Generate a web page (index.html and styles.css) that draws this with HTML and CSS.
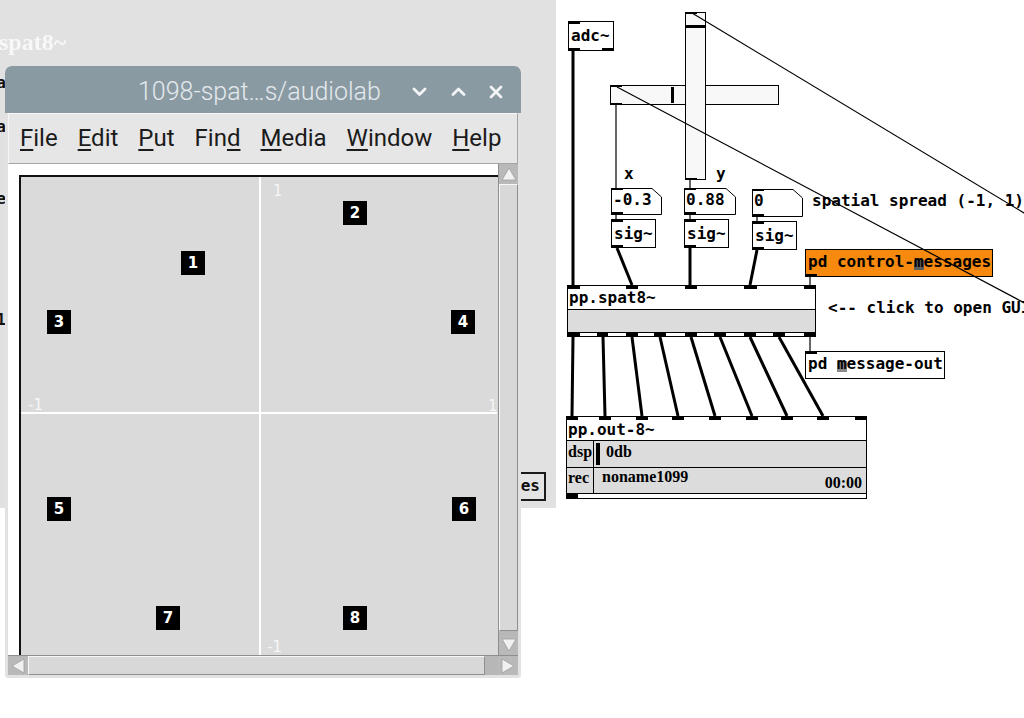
FILE: index.html
```html
<!DOCTYPE html>
<html lang="en">
<head>
<meta charset="utf-8">
<title>pp.spat8~</title>
<link rel="stylesheet" href="styles.css">
</head>
<body>
<div class="bgwin">
  <div class="bg-title">spat8~</div>
  <span class="edge edge1">a</span>
  <span class="edge edge2">a</span>
  <span class="edge edge3">e</span>
  <span class="edge edge4">1</span>
  <div class="bg-box">es</div>
</div>

<div class="guiwin">
  <div class="titlebar">
    <span class="title">1098-spat…s/audiolab</span>
    <div class="tb-btns">
      <svg class="tb-min" width="15" height="9" viewBox="0 0 15 9"><polyline points="2,2 7.5,7.5 13,2"/></svg>
      <svg class="tb-max" width="15" height="9" viewBox="0 0 15 9"><polyline points="2,7.5 7.5,2 13,7.5"/></svg>
      <svg class="tb-close" width="14" height="14" viewBox="0 0 14 14"><path d="M2 2L12 12M12 2L2 12"/></svg>
    </div>
  </div>
  <div class="winbody">
    <div class="menubar">
      <span class="mi"><u>F</u>ile</span>
      <span class="mi"><u>E</u>dit</span>
      <span class="mi"><u>P</u>ut</span>
      <span class="mi">Fin<u>d</u></span>
      <span class="mi"><u>M</u>edia</span>
      <span class="mi"><u>W</u>indow</span>
      <span class="mi"><u>H</u>elp</span>
    </div>
    <div class="mainrow">
      <div class="canvas">
        <div class="spatgui">
          <i class="axis axis-v"></i>
          <i class="axis axis-h"></i>
          <span class="ax-lbl al-top">1</span>
          <span class="ax-lbl al-left">-1</span>
          <span class="ax-lbl al-right">1</span>
          <span class="ax-lbl al-bottom">-1</span>
          <span class="spk s1">1</span>
          <span class="spk s2">2</span>
          <span class="spk s3">3</span>
          <span class="spk s4">4</span>
          <span class="spk s5">5</span>
          <span class="spk s6">6</span>
          <span class="spk s7">7</span>
          <span class="spk s8">8</span>
        </div>
      </div>
      <div class="vscroll">
        <div class="sb-btn"><svg width="16" height="14" viewBox="0 0 16 14"><polygon points="8,1 15,13 1,13"/></svg></div>
        <div class="vthumb"></div>
        <div class="vtrough"></div>
        <div class="sb-btn"><svg width="16" height="14" viewBox="0 0 16 14"><polygon points="1,1 15,1 8,13"/></svg></div>
      </div>
    </div>
    <div class="hscroll">
      <div class="sb-btn sb-h"><svg width="14" height="16" viewBox="0 0 14 16"><polygon points="1,8 13,1 13,15"/></svg></div>
      <div class="hthumb"></div>
      <div class="htrough"></div>
      <div class="sb-btn sb-h"><svg width="14" height="16" viewBox="0 0 14 16"><polygon points="1,1 13,8 1,15"/></svg></div>
    </div>
  </div>
</div>

<div class="patch">
  <div class="pd box adc">adc~</div>
  <div class="pd hsl"><i class="hsl-mark"></i></div>
  <div class="pd vsl"><i class="vsl-mark"></i></div>
  <span class="pd lbl lx">x</span>
  <span class="pd lbl ly">y</span>

  <div class="pd nb nb1"><svg class="nb-shape" width="51" height="27" viewBox="0 0 51 27"><polygon points="0.5,0.5 41,0.5 50.5,9 50.5,26.5 0.5,26.5"/></svg><span class="nb-txt">-0.3</span></div>
  <div class="pd nb nb2"><svg class="nb-shape" width="52" height="27" viewBox="0 0 52 27"><polygon points="0.5,0.5 42,0.5 51.5,9 51.5,26.5 0.5,26.5"/></svg><span class="nb-txt">0.88</span></div>
  <div class="pd nb nb3"><svg class="nb-shape" width="51" height="28" viewBox="0 0 51 28"><polygon points="0.5,0.5 41,0.5 50.5,9 50.5,27.5 0.5,27.5"/></svg><span class="nb-txt">0</span></div>
  <span class="pd lbl spread">spatial spread (-1, 1)</span>

  <div class="pd box sig sig1">sig~</div>
  <div class="pd box sig sig2">sig~</div>
  <div class="pd box sig sig3">sig~</div>

  <div class="pd box ctl">pd control-<span class="blot">m</span>essages</div>

  <div class="pd spat">
    <div class="spat-top">pp.spat8~</div>
    <div class="spat-mid"></div>
    <div class="spat-foot"></div>
  </div>
  <span class="pd lbl click">&lt;-- click to open GUI</span>

  <div class="pd box msgout">pd <span class="blot2">m</span>essage-out</div>

  <div class="pd out8">
    <div class="out-top">pp.out-8~</div>
    <div class="out-row out-dsp">
      <span class="cell">dsp</span>
      <div class="rest"><i class="meter"></i><span class="db">0db</span></div>
    </div>
    <div class="out-row out-rec">
      <span class="cell">rec</span>
      <div class="rest"><span class="fname">noname1099</span><span class="time">00:00</span></div>
    </div>
    <div class="out-foot"></div>
  </div>

  <svg class="wires" width="1024" height="718" viewBox="0 0 1024 718">
    <g class="thick">
      <line x1="573" y1="51" x2="573" y2="285"/>
      <line x1="617" y1="248" x2="632" y2="285"/>
      <line x1="690" y1="248" x2="690" y2="285"/>
      <line x1="757" y1="250" x2="750" y2="285"/>
      <line x1="573" y1="337" x2="572" y2="416"/>
      <line x1="603" y1="337" x2="605" y2="416"/>
      <line x1="632" y1="337" x2="642" y2="416"/>
      <line x1="660" y1="337" x2="678" y2="416"/>
      <line x1="691" y1="337" x2="715" y2="416"/>
      <line x1="720" y1="337" x2="752" y2="416"/>
      <line x1="750" y1="337" x2="787" y2="416"/>
      <line x1="779" y1="337" x2="823" y2="416"/>
    </g>
    <g class="thin">
      <line x1="616" y1="105" x2="616" y2="188"/>
      <line x1="690" y1="180" x2="690" y2="188"/>
      <line x1="616" y1="215" x2="616" y2="219"/>
      <line x1="690" y1="215" x2="690" y2="219"/>
      <line x1="757" y1="217" x2="757" y2="221"/>
      <line x1="810" y1="277" x2="810" y2="285"/>
      <line x1="810" y1="337" x2="810" y2="351"/>
      <line x1="692" y1="13" x2="1034" y2="219"/>
      <line x1="617" y1="87" x2="1034" y2="308"/>
    </g>
    <g class="io">
      <rect x="568" y="21" width="12" height="3"/>
      <rect x="568" y="48" width="12" height="3"/>
      <rect x="602" y="48" width="12" height="3"/>
      <rect x="610" y="85" width="12" height="2"/>
      <rect x="610" y="103" width="12" height="2"/>
      <rect x="685" y="12" width="12" height="2"/>
      <rect x="685" y="178" width="12" height="2"/>
      <rect x="611" y="188" width="12" height="2"/>
      <rect x="611" y="212" width="12" height="3"/>
      <rect x="684" y="188" width="12" height="2"/>
      <rect x="684" y="212" width="12" height="3"/>
      <rect x="752" y="189" width="12" height="2"/>
      <rect x="752" y="214" width="12" height="3"/>
      <rect x="611" y="219" width="12" height="3"/>
      <rect x="611" y="245" width="12" height="3"/>
      <rect x="684" y="219" width="12" height="3"/>
      <rect x="684" y="245" width="12" height="3"/>
      <rect x="752" y="221" width="12" height="3"/>
      <rect x="752" y="247" width="12" height="3"/>
      <rect x="805" y="274" width="12" height="3"/>
      <rect x="567" y="285" width="13" height="4"/>
      <rect x="626" y="285" width="12" height="4"/>
      <rect x="685" y="285" width="12" height="4"/>
      <rect x="744" y="285" width="13" height="4"/>
      <rect x="804" y="285" width="12" height="4"/>
      <rect x="567" y="333" width="13" height="4"/>
      <rect x="597" y="333" width="11" height="4"/>
      <rect x="626" y="333" width="12" height="4"/>
      <rect x="654" y="333" width="12" height="4"/>
      <rect x="685" y="333" width="12" height="4"/>
      <rect x="714" y="333" width="12" height="4"/>
      <rect x="744" y="333" width="12" height="4"/>
      <rect x="773" y="333" width="12" height="4"/>
      <rect x="804" y="333" width="12" height="4"/>
      <rect x="805" y="351" width="12" height="3"/>
      <rect x="566" y="416" width="12" height="4"/>
      <rect x="599" y="416" width="12" height="4"/>
      <rect x="636" y="416" width="12" height="4"/>
      <rect x="672" y="416" width="12" height="4"/>
      <rect x="709" y="416" width="12" height="4"/>
      <rect x="746" y="416" width="12" height="4"/>
      <rect x="781" y="416" width="12" height="4"/>
      <rect x="817" y="416" width="12" height="4"/>
      <rect x="855" y="416" width="12" height="4"/>
      <rect x="566" y="494" width="12" height="5"/>
    </g>
  </svg>
</div>
</body>
</html>
```

FILE: styles.css
```css
* { box-sizing: border-box; }
html, body { margin: 0; padding: 0; }
body {
  width: 1024px;
  height: 718px;
  overflow: hidden;
  position: relative;
  background: #ffffff;
  font-family: "DejaVu Sans", sans-serif;
}

/* background window (behind the GUI window) */
.bgwin {
  position: absolute;
  left: 0;
  top: 0;
  width: 556px;
  height: 508px;
  background: #e1e1e1;
  overflow: hidden;
}
.bg-title {
  position: absolute;
  left: -1px;
  top: 30px;
  font: bold 24px/24px "Liberation Serif", serif;
  color: #f8f8f8;
  filter: blur(0.5px);
}
.edge {
  position: absolute;
  right: 550px;
  font: bold 16px/16px "DejaVu Sans Mono", monospace;
  color: #111;
}
.edge1 { top: 75px; }
.edge2 { top: 119px; }
.edge3 { top: 191px; }
.edge4 { top: 312px; }
.bg-box {
  position: absolute;
  left: 470px;
  top: 472px;
  width: 76px;
  height: 29px;
  border: 2px solid #1a1a1a;
  background: #e4e4e4;
  text-align: right;
  padding: 4px 4px 0 0;
  font: bold 16px/16px "DejaVu Sans Mono", monospace;
  color: #111;
}

/* GUI window */
.guiwin {
  position: absolute;
  left: 5px;
  top: 66px;
  width: 516px;
  height: 612px;
  border-radius: 7px 7px 3px 3px;
  overflow: hidden;
  background: #e2e2e2;
  display: flex;
  flex-direction: column;
}
.titlebar {
  height: 47px;
  flex: none;
  background: #8a9aa3;
  display: flex;
  align-items: flex-start;
  padding: 0 18px 0 133px;
}
.title {
  margin-top: 13px;
  font: 300 25px/25px "Roboto", sans-serif;
  color: #e4e9ec;
  white-space: nowrap;
}
.tb-btns {
  margin-left: auto;
  margin-top: 19px;
  display: flex;
  align-items: flex-start;
}
.tb-btns svg { fill: none; stroke: #f2f4f5; stroke-width: 2.8; stroke-linecap: round; stroke-linejoin: round; }
.tb-min { margin-top: 2px; margin-right: 24px; }
.tb-max { margin-top: 2px; margin-right: 23px; }
.tb-close { margin-top: 0; }

.winbody {
  flex: 1;
  display: flex;
  flex-direction: column;
  padding: 0 3px 3px 3px;
}
.menubar {
  height: 51px;
  flex: none;
  display: flex;
  align-items: flex-start;
  padding: 12px 0 0 1px;
  background: #e6e6e6;
  border-top: 1px solid #f6f6f6;
  border-left: 1px solid #f6f6f6;
  border-bottom: 1px solid #a4a4a4;
  border-right: 1px solid #a4a4a4;
}
.mi {
  padding: 0 10px;
  font: 400 24px/24px "Roboto", sans-serif;
  color: #1b1b1b;
  white-space: nowrap;
}
.mi u {
  text-decoration-thickness: 2px;
  text-underline-offset: 3px;
}

.mainrow {
  height: 491px;
  flex: none;
  display: flex;
}
.canvas {
  width: 490px;
  height: 491px;
  background: #ffffff;
  overflow: hidden;
  position: relative;
}
.spatgui {
  position: relative;
  margin: 11px 0 0 11px;
  width: 484px;
  height: 500px;
  border-left: 2px solid #111;
  border-top: 2px solid #111;
  background: #dadada;
}
.axis { position: absolute; background: #ffffff; }
.axis-v { left: 238px; top: 0; bottom: 0; width: 2px; }
.axis-h { top: 235px; left: 0; width: 476px; height: 2px; }
.ax-lbl {
  position: absolute;
  font: 15px/15px "DejaVu Sans", sans-serif;
  color: #f6f6f6;
}
.al-top { left: 252px; top: 7px; }
.al-left { left: 7px; top: 221px; }
.al-right { left: 467px; top: 222px; }
.al-bottom { left: 246px; top: 463px; }
.spk {
  position: absolute;
  width: 24px;
  height: 24px;
  background: #000;
  color: #fff;
  display: flex;
  align-items: center;
  justify-content: center;
  font: bold 15px/15px "DejaVu Sans", sans-serif;
}
.s1 { left: 160px; top: 74px; }
.s2 { left: 322px; top: 24px; }
.s3 { left: 26px; top: 133px; }
.s4 { left: 430px; top: 133px; }
.s5 { left: 26px; top: 320px; }
.s6 { left: 431px; top: 320px; }
.s7 { left: 135px; top: 429px; }
.s8 { left: 322px; top: 429px; }

.vscroll {
  width: 20px;
  display: flex;
  flex-direction: column;
  background: #b7b7b7;
  border-left: 1px solid #8e8e8e;
}
.sb-btn {
  height: 20px;
  flex: none;
  display: flex;
  align-items: center;
  justify-content: center;
  background: #b9b9b9;
}
.sb-btn svg { fill: #f1f1f1; stroke: #a0a0a0; stroke-width: 0.8; }
.vthumb {
  height: 447px;
  flex: none;
  background: #d8d8d8;
  border: 1px solid;
  border-color: #f7f7f7 #8f8f8f #8f8f8f #f7f7f7;
}
.vtrough { flex: 1; }

.hscroll {
  height: 20px;
  flex: none;
  display: flex;
  background: #b7b7b7;
  border-top: 1px solid #8e8e8e;
}
.sb-h { width: 20px; height: 19px; }
.hthumb {
  width: 457px;
  flex: none;
  background: #d8d8d8;
  border: 1px solid;
  border-color: #f7f7f7 #8f8f8f #8f8f8f #f7f7f7;
}
.htrough { flex: 1; }

/* Pd patch */
.patch {
  position: absolute;
  left: 0;
  top: 0;
  width: 1024px;
  height: 718px;
}
.pd {
  position: absolute;
  font: bold 16px/16px "DejaVu Sans Mono", monospace;
  color: #000;
  white-space: pre;
}
.box {
  border: 1px solid #000;
  background: #fff;
  padding-left: 2px;
}
.adc { left: 568px; top: 21px; width: 46px; height: 30px; padding-top: 6px; }

.hsl {
  left: 610px;
  top: 85px;
  width: 169px;
  height: 20px;
  border: 1px solid #000;
  background: #f8f8f8;
}
.hsl-mark { position: absolute; left: 60px; top: 1px; width: 3px; height: 16px; background: #000; }
.vsl {
  left: 685px;
  top: 12px;
  width: 21px;
  height: 168px;
  border: 1px solid #000;
  background: #f8f8f8;
  z-index: 2;
}
.vsl-mark { position: absolute; left: 0; top: 12px; width: 19px; height: 3px; background: #000; }

.lbl { background: transparent; }
.lx { left: 624px; top: 166px; }
.ly { left: 716px; top: 166px; }
.spread { left: 812px; top: 193px; }
.click { left: 828px; top: 300px; }

.nb { height: 27px; }
.nb-shape { position: absolute; left: 0; top: 0; }
.nb-shape polygon { fill: #fff; stroke: #000; stroke-width: 1; }
.nb-txt { position: relative; display: block; padding: 4px 0 0 2px; }
.nb1 { left: 611px; top: 188px; width: 51px; }
.nb2 { left: 684px; top: 188px; width: 52px; }
.nb3 { left: 752px; top: 189px; width: 51px; height: 28px; }

.sig { width: 45px; height: 29px; padding-top: 6px; }
.sig1 { left: 611px; top: 219px; }
.sig2 { left: 684px; top: 219px; }
.sig3 { left: 752px; top: 221px; }

.ctl {
  left: 805px;
  top: 249px;
  width: 188px;
  height: 28px;
  padding-top: 4px;
  background: #f6890e;
}
.blot {
  background: linear-gradient(to bottom, transparent 40%, #5d5d5d 40%, #5d5d5d 95%, transparent 95%);
}
.msgout { left: 805px; top: 351px; width: 140px; height: 28px; padding-top: 4px; }
.blot2 {
  background: linear-gradient(to bottom, transparent 35%, #8a8a8a 35%, #8a8a8a 95%, transparent 95%);
}

.spat {
  left: 567px;
  top: 285px;
  width: 249px;
  height: 52px;
  border: 1px solid #000;
  background: #fff;
  display: flex;
  flex-direction: column;
}
.spat-top { height: 24px; flex: none; border-bottom: 1px solid #000; padding: 4px 0 0 1px; }
.spat-mid { height: 23px; flex: none; background: #dcdcdc; border-bottom: 1px solid #000; }
.spat-foot { height: 3px; flex: none; background: #fff; }

.out8 {
  left: 566px;
  top: 416px;
  width: 301px;
  height: 83px;
  border: 1px solid #000;
  background: #fff;
  display: flex;
  flex-direction: column;
}
.out-top { height: 24px; flex: none; border-bottom: 1px solid #000; padding: 5px 0 0 1px; }
.out-row {
  flex: none;
  display: flex;
  background: #dcdcdc;
  border-bottom: 1px solid #000;
  font: bold 16px/16px "Liberation Serif", serif;
}
.out-dsp { height: 27px; }
.out-rec { height: 26px; }
.cell { width: 27px; flex: none; border-right: 1px solid #000; padding: 3px 0 0 1px; }
.out-rec .cell { padding-top: 2px; }
.rest { flex: 1; display: flex; align-items: flex-start; }
.meter { display: block; width: 4px; height: 22px; margin: 2px 0 0 2px; background: #000; }
.db { margin: 3px 0 0 6px; }
.fname { margin: 1px 0 0 8px; }
.time { margin: 7px 4px 0 auto; }
.out-foot { height: 4px; flex: none; background: #fff; }

.wires {
  position: absolute;
  left: 0;
  top: 0;
  z-index: 5;
  pointer-events: none;
}
.wires .thick line { stroke: #000; stroke-width: 3; }
.wires .thin line { stroke: #000; stroke-width: 1.2; }
.wires .io rect { fill: #000; }
```
